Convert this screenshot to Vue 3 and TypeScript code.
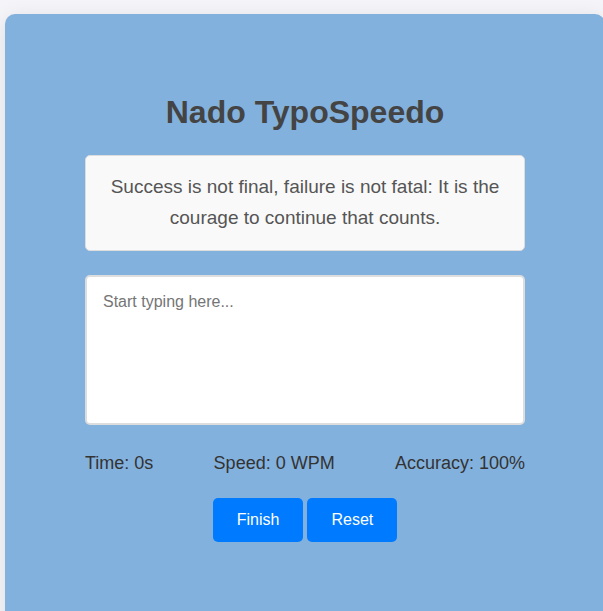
<script setup lang="ts">
import { computed, ref } from 'vue'

const quote = 'Success is not final, failure is not fatal: It is the courage to continue that counts.'

const typed = ref('')
const startedAt = ref<number | null>(null)
const seconds = ref(0)
const speed = ref(0)
let timer: number | undefined

const accuracy = computed<number>(() => {
  if (!typed.value.length) return 100
  const correct = [...typed.value].filter((char, i) => char === quote[i]).length
  return Math.round((correct / typed.value.length) * 100)
})

function tick(): void {
  if (startedAt.value === null) return
  seconds.value = Math.floor((Date.now() - startedAt.value) / 1000)
  const words = typed.value.trim().split(/\s+/).filter(Boolean).length
  speed.value = seconds.value ? Math.round((words * 60) / seconds.value) : 0
}

function onInput(): void {
  if (startedAt.value !== null) return
  startedAt.value = Date.now()
  timer = window.setInterval(tick, 1000)
}

function finish(): void {
  tick()
  window.clearInterval(timer)
}

function reset(): void {
  window.clearInterval(timer)
  startedAt.value = null
  typed.value = ''
  seconds.value = 0
  speed.value = 0
}
</script>

<template>
  <main class="card">
    <h1 class="title">Nado TypoSpeedo</h1>
    <p class="quote">{{ quote }}</p>
    <textarea
      v-model="typed"
      class="entry"
      aria-label="Typing area"
      placeholder="Start typing here..."
      @input="onInput"
    ></textarea>
    <div class="stats">
      <span>Time: {{ seconds }}s</span>
      <span>Speed: {{ speed }} WPM</span>
      <span>Accuracy: {{ accuracy }}%</span>
    </div>
    <div class="actions">
      <button type="button" class="button" @click="finish">Finish</button>
      <button type="button" class="button" @click="reset">Reset</button>
    </div>
  </main>
</template>

<style>
body {
  overflow-x: hidden;
  background: #f4f4f9;
}
</style>

<style scoped>
.card {
  box-sizing: border-box;
  max-width: 600px;
  min-height: 100vh;
  margin: 14px -2px 0 5px;
  padding: 80px;
  border-radius: 10px;
  background: #83b1dd;
  box-shadow: 0 4px 20px rgba(0, 0, 0, 0.1);
  color: #333;
  font-family: "Liberation Sans", Arial, sans-serif;
  text-align: center;
}

.title {
  margin: 0 0 24px;
  color: #444;
  font-size: 32px;
  line-height: 37px;
}

.quote {
  margin: 0 0 24px;
  padding: 15px 16px 17px;
  border: 1px solid #ddd;
  border-radius: 5px;
  background: #f9f9f9;
  color: #555;
  font-size: 19px;
  line-height: 31px;
}

.entry {
  display: block;
  box-sizing: border-box;
  width: 100%;
  height: 150px;
  padding: 16px;
  border: 2px solid #ddd;
  border-radius: 5px;
  background: #fff;
  font: 16px "Liberation Sans", Arial, sans-serif;
  resize: none;
}

.stats {
  display: flex;
  justify-content: space-between;
  margin: 28px 0 25px;
  font-size: 18px;
  line-height: 20px;
}

.actions {
  display: flex;
  justify-content: center;
  gap: 4px;
}

.button {
  padding: 12px 24px;
  border: 0;
  border-radius: 5px;
  background: #007bff;
  color: #fff;
  font: 16px/20px "Liberation Sans", Arial, sans-serif;
  cursor: pointer;
}
</style>
